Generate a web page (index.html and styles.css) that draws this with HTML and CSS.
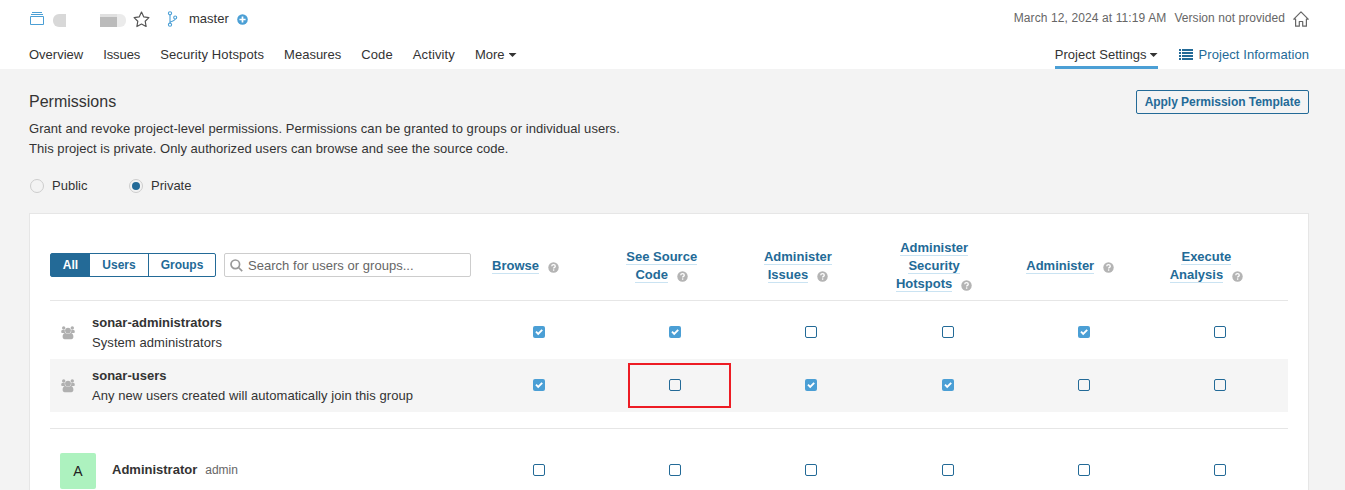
FILE: index.html
```html
<!DOCTYPE html>
<html lang="en">
<head>
<meta charset="utf-8">
<title>Permissions</title>
<link rel="stylesheet" href="styles.css">
</head>
<body>
<svg class="defs" width="0" height="0" aria-hidden="true">
  <symbol id="help" viewBox="0 0 16 16"><circle cx="8" cy="8" r="7.6" fill="#b4b4b4"/><path d="M5.4 6.2C5.5 4.6 6.6 3.8 8 3.8c1.500 0 2.600.9 2.600 2.200C10.600 7.900 8.200 7.700 8.200 9.500" fill="none" stroke="#fff" stroke-width="1.900"/><rect x="7.200" y="10.700" width="2" height="2" fill="#fff"/></symbol>
  <symbol id="group" viewBox="0 0 14 14"><g fill="#b0b0b0"><circle cx="2.700" cy="2" r="1.700"/><circle cx="11.300" cy="2" r="1.700"/><circle cx="7" cy="4.600" r="2.900"/><path d="M.9 4h2.900c-.2 1.500.1 2.200.8 3.100H1.500C.6 7.100.2 6.500.2 5.800.2 5 .4 4.400.9 4zM13.100 4h-2.900c.2 1.500-.1 2.200-.8 3.100h3.100c.9 0 1.300-.6 1.300-1.300 0-.8-.2-1.400-.7-1.800zM4.300 7.100c1.600.9 3.800.9 5.400 0 1.900.1 2.700 1.800 2.700 3.700 0 1.500-.8 2.400-2 2.400H3.600c-1.200 0-2-.9-2-2.400 0-1.900.8-3.600 2.700-3.700z"/></g></symbol>
  <symbol id="check" viewBox="0 0 12 12"><path d="M3 5.700l2.200 2.200L9.200 3.900" fill="none" stroke="#fff" stroke-width="1.900"/></symbol>
</svg>
<header class="header">
  <div class="project-bar">
    <svg class="project-icon" width="14" height="14" viewBox="0 0 14 14" fill="none" stroke="#4b9fd5"><path d="M.5 4.500h13v8H.5zM1 2.500h12M2 .5h10"/></svg>
    <span class="mask mask-a"></span>
    <span class="mask mask-b"></span>
    <svg class="star" width="17" height="17" viewBox="0 0 17 17" fill="none" stroke="#555" stroke-width="1.200" stroke-linejoin="round"><path d="M8.500 1.100l2.300 4.800 5.100.7-3.700 3.600.9 5.300-4.600-2.500-4.600 2.500.9-5.300L1.100 6.600l5.100-.7z"/></svg>
    <svg class="branch-icon" width="11" height="16" viewBox="0 0 11 16" fill="none" stroke="#4b9fd5" stroke-width="1.100"><circle cx="3" cy="2.300" r="1.600"/><circle cx="3" cy="13.700" r="1.600"/><circle cx="8.200" cy="6.500" r="1.500"/><path d="M3 4v8M8.200 8c-.2 2-3 1.600-5 3.300"/></svg>
    <span class="branch">master</span>
    <svg class="plus" width="11" height="11" viewBox="0 0 11 11"><circle cx="5.500" cy="5.500" r="5.300" fill="#4b9fd5"/><path d="M5.500 2.400v6.200M2.400 5.500h6.200" stroke="#fff" stroke-width="1.700"/></svg>
    <div class="meta"><span class="date">March 12, 2024 at 11:19 AM</span><span class="version">Version not provided</span>
      <svg width="16" height="16" viewBox="0 0 16 16" fill="none" stroke="#666" stroke-width="1.200" stroke-linejoin="round"><path d="M2.600 8.200H.8L8 .9l7.200 7.300h-1.800v7H9.700v-4.700H6.300v4.700H2.600z"/></svg>
    </div>
  </div>
  <nav class="tabs">
    <a class="t-overview">Overview</a><a class="t-issues">Issues</a><a class="t-hotspots">Security Hotspots</a><a class="t-measures">Measures</a><a class="t-code">Code</a><a class="t-activity">Activity</a><a>More<i class="caret"></i></a>
    <a class="settings">Project Settings<i class="caret"></i></a>
    <a class="info"><svg width="14" height="11" viewBox="0 0 14 11" fill="#236a97"><path d="M0 0h2v2H0zM3 0h11v2H3zM0 3h2v2H0zM3 3h11v2H3zM0 6h2v2H0zM3 6h11v2H3zM0 9h2v2H0zM3 9h11v2H3z"/></svg><span>Project Information</span></a>
  </nav>
</header>
<main class="page">
  <div class="page-head">
    <div>
      <h1>Permissions</h1>
      <p class="desc-a">Grant and revoke project-level permissions. Permissions can be granted to groups or individual users.</p>
      <p class="desc-b">This project is private. Only authorized users can browse and see the source code.</p>
    </div>
    <button class="apply">Apply Permission Template</button>
  </div>
  <div class="visibility">
    <label class="public"><i class="radio"></i>Public</label>
    <label><i class="radio on"></i>Private</label>
  </div>
  <section class="panel">
    <div class="row head">
      <div class="filters">
        <div class="toggle"><span class="active">All</span><span class="users">Users</span><span class="groups">Groups</span></div>
        <div class="search"><svg width="13" height="13" viewBox="0 0 13 13" fill="none" stroke="#999" stroke-width="1.700"><circle cx="5.300" cy="5.300" r="4.300"/><path d="M8.500 8.500l3.700 3.700"/></svg><span>Search for users or groups...</span></div>
      </div>
      <div class="perm"><a>Browse</a><svg class="help"><use href="#help"/></svg></div>
      <div class="perm"><a>See Source<br>Code</a><svg class="help"><use href="#help"/></svg></div>
      <div class="perm"><a>Administer<br>Issues</a><svg class="help"><use href="#help"/></svg></div>
      <div class="perm"><a>Administer<br>Security<br>Hotspots</a><svg class="help"><use href="#help"/></svg></div>
      <div class="perm"><a>Administer</a><svg class="help"><use href="#help"/></svg></div>
      <div class="perm"><a>Execute<br>Analysis</a><svg class="help"><use href="#help"/></svg></div>
    </div>
    <div class="row group first">
      <div class="holder"><svg class="group-icon"><use href="#group"/></svg><div><b class="n-admins">sonar-administrators</b><p class="sys">System administrators</p></div></div>
      <div class="cell"><i class="box on"><svg><use href="#check"/></svg></i></div>
      <div class="cell"><i class="box on"><svg><use href="#check"/></svg></i></div>
      <div class="cell"><i class="box"></i></div>
      <div class="cell"><i class="box"></i></div>
      <div class="cell"><i class="box on"><svg><use href="#check"/></svg></i></div>
      <div class="cell"><i class="box"></i></div>
    </div>
    <div class="row group shaded">
      <div class="holder"><svg class="group-icon"><use href="#group"/></svg><div><b class="n-users">sonar-users</b><p class="any">Any new users created will automatically join this group</p></div></div>
      <div class="cell"><i class="box on"><svg><use href="#check"/></svg></i></div>
      <div class="cell marked"><i class="box"></i></div>
      <div class="cell"><i class="box on"><svg><use href="#check"/></svg></i></div>
      <div class="cell"><i class="box on"><svg><use href="#check"/></svg></i></div>
      <div class="cell"><i class="box"></i></div>
      <div class="cell"><i class="box"></i></div>
    </div>
    <div class="row user">
      <div class="holder"><span class="avatar">A</span><b class="n-admin">Administrator</b><span class="login">admin</span></div>
      <div class="cell"><i class="box"></i></div>
      <div class="cell"><i class="box"></i></div>
      <div class="cell"><i class="box"></i></div>
      <div class="cell"><i class="box"></i></div>
      <div class="cell"><i class="box"></i></div>
      <div class="cell"><i class="box"></i></div>
    </div>
  </section>
</main>
</body>
</html>
```
FILE: styles.css
```css
*, *::after { box-sizing: border-box; }
html, body { height: 100%; overflow: hidden; }
body { display: flex; flex-direction: column; margin: 0; background: #f3f3f3; color: #333; font: 13px/20px "Liberation Sans", Arial, sans-serif; }
h1, p { margin: 0; font-weight: 400; }
i { font-style: normal; }
svg { display: block; flex: none; }
.defs { position: absolute; }

.header { flex: none; height: 69px; padding: 0 36px 0 29px; background: #fff; }
.project-bar { display: flex; align-items: center; height: 38px; }
.project-icon { margin: 0 0 0 1px; }
.mask-a { width: 13px; height: 13px; margin: 3px 0 0 9px; border-radius: 6px 0 0 6px; background: #d8d8d8; }
.mask-b { width: 26px; height: 13px; margin: 3px 7px 0 34px; border-radius: 0 6px 6px 0; background: linear-gradient(#e0e0e0, #e0e0e0) 0 0 / 17px 3px no-repeat, linear-gradient(90deg, #bbb 17px, #ebebeb 17px); }
.branch-icon { margin-left: 17px; }
.branch { margin-left: 11px; }
.plus { margin-left: 8px; }
.meta { display: flex; align-items: center; margin-left: auto; font-size: 12px; color: #666; }
.date { letter-spacing: 0.11px; }
.version { margin: 0 8px; letter-spacing: 0.06px; }
.date, .version { padding-bottom: 2px; }

.tabs { display: flex; gap: 20px; height: 31px; }
.tabs a { display: flex; height: 31px; padding-top: 7px; white-space: nowrap; }
.t-issues { letter-spacing: -0.1px; }
.t-hotspots { letter-spacing: 0.12px; }
.t-code { letter-spacing: 0.12px; }
.t-activity { letter-spacing: 0.12px; }
.caret { width: 8px; height: 4px; margin: 8px 0 0 4px; background: #333; clip-path: polygon(0 0, 100% 0, 50% 100%); }
.tabs .settings { margin-left: auto; border-bottom: 3px solid #4b9fd5; letter-spacing: 0.05px; }
.settings .caret { margin-left: 3px; }
.tabs .info { color: #236a97; letter-spacing: 0.07px; }
.info svg { margin: 4px 6px 0 1px; }

.page { flex: 1; min-height: 0; display: flex; flex-direction: column; padding: 21px 36px 0 29px; }
.page-head { display: flex; justify-content: space-between; align-items: flex-start; }
h1 { font-size: 16px; line-height: 24px; margin-bottom: 5px; }
.desc-a { letter-spacing: 0.055px; }
.desc-b { letter-spacing: 0.04px; }
.apply { width: 173px; height: 24px; padding: 0; border: 1px solid #236a97; border-radius: 2px; background: transparent; color: #236a97; font: bold 12px/22px "Liberation Sans", Arial, sans-serif; letter-spacing: -0.03px; white-space: nowrap; }
.visibility { display: flex; height: 20px; margin-top: 17px; }
.visibility label { display: flex; align-items: center; }
.public { width: 99px; }
.radio { display: flex; align-items: center; justify-content: center; width: 14px; height: 14px; margin: 0 8px 0 1px; border: 1px solid #cdcdcd; border-radius: 50%; }
.radio.on::after { content: ""; width: 8px; height: 8px; border-radius: 50%; background: #236a97; }

.panel { flex: 1; min-height: 0; overflow: hidden; margin-top: 17px; padding: 20px 20px 0; border: 1px solid #e6e6e6; border-bottom: 0; background: #fff; }
.row { display: grid; grid-template-columns: 421px repeat(6, 1fr); align-items: center; }
.head { height: 67px; padding-bottom: 4px; border-bottom: 1px solid #e6e6e6; }
.filters { display: flex; gap: 8px; }
.toggle { display: flex; width: 166px; height: 24px; border: 1px solid #236a97; border-radius: 2px; color: #236a97; font: bold 12px/22px "Liberation Sans", Arial, sans-serif; text-align: center; }
.active { width: 39px; background: #236a97; color: #fff; }
.users { width: 59px; border-right: 1px solid #236a97; }
.groups { flex: 1; }
.search { display: flex; align-items: center; width: 247px; height: 24px; padding-left: 5px; border: 1px solid #cdcdcd; border-radius: 2px; color: #666; }
.search span { margin: 1px 0 0 5px; letter-spacing: 0.03px; }
.perm { padding: 2px 27px 0 0; text-align: center; line-height: 18px; font-weight: bold; white-space: nowrap; }
.perm a { border-bottom: 1px solid #cae3f2; color: #236a97; }
.help { display: inline-block; width: 11px; height: 11px; margin-left: 9px; vertical-align: -3px; }

.group { height: 53px; }
.first { height: 58px; padding-top: 5px; }
.shaded { background: #f5f5f5; }
.holder { display: flex; align-items: center; padding-left: 10px; white-space: nowrap; }
.holder b { display: block; }
.any { letter-spacing: 0.055px; }
.sys { letter-spacing: 0.07px; }
.group-icon { width: 14px; height: 14px; margin: 1px 17px 0 1px; }
.cell { display: flex; align-items: center; justify-content: center; height: 100%; padding-bottom: 1px; }
.box { width: 12px; height: 12px; border: 1px solid #236a97; border-radius: 2px; }
.box.on { border: 0; background: #4b9fd5; }
.box svg { width: 12px; height: 12px; }
.marked { position: relative; }
.marked::after { content: ""; position: absolute; left: 21px; top: 4px; width: 103px; height: 45px; border: 2px solid #ed1c24; }
.user { height: 80px; margin-top: 16px; border-top: 1px solid #e6e6e6; padding-top: 4px; }
.user .cell { padding-bottom: 2px; }
.user b, .login { padding-bottom: 2px; }
.avatar { width: 36px; height: 36px; margin-right: 16px; border-radius: 2px; background: #adf2bf; color: #222; font-size: 14px; line-height: 36px; text-align: center; }
.login { margin-left: 8px; font-size: 12px; color: #666; }
```
